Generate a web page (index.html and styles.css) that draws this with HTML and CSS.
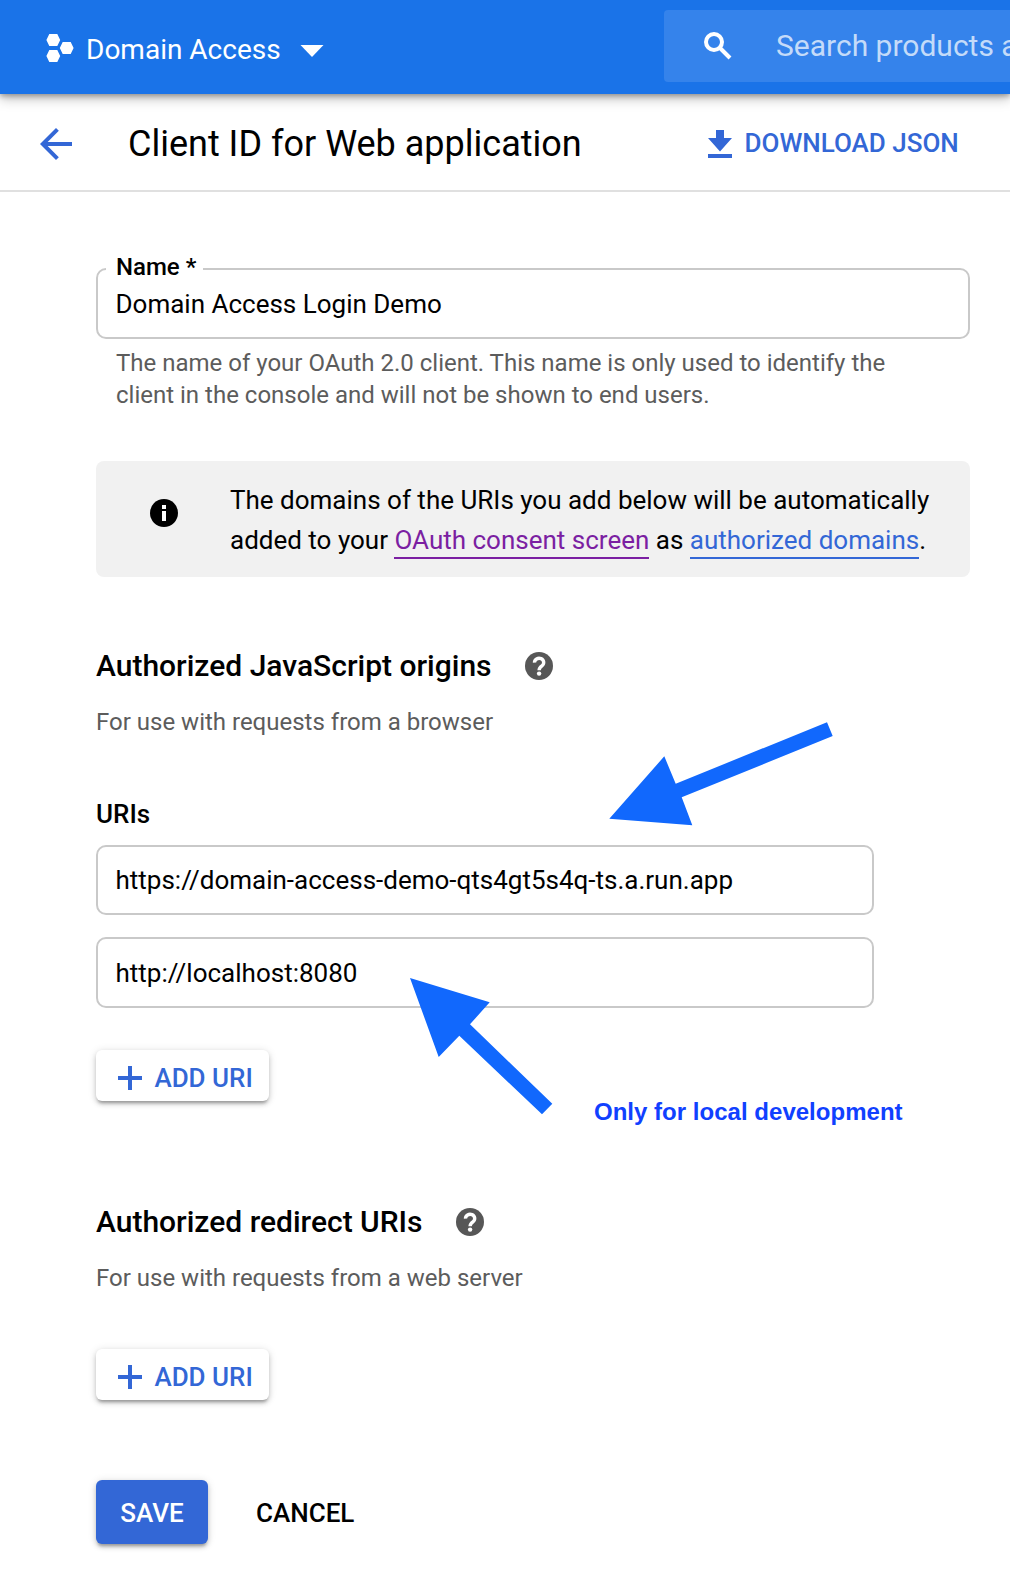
FILE: index.html
```html
<!DOCTYPE html>
<html lang="en">
<head>
<meta charset="utf-8">
<title>Client ID for Web application</title>
<link rel="stylesheet" href="styles.css">
</head>
<body>
<header class="topbar">
  <div class="project">
    <svg class="project-logo" width="28" height="28" viewBox="0 0 28 28"><path d="M.4 6 3.300 0h8l2.900 6-2.900 6h-8zM13.800 14l2.900-6h8l2.900 6-2.900 6h-8zM.4 22l2.900-6h8l2.900 6-2.900 6h-8z"/></svg>
    <span class="project-name">Domain Access</span>
    <svg class="caret" width="24" height="12" viewBox="0 0 24 12"><path d="M.5 0h23L12 12z"/></svg>
  </div>
  <div class="search">
    <svg width="28" height="28" viewBox="0 0 28 28"><circle cx="10" cy="10" r="8"/><path d="m15 15 11 11"/></svg>
    <span class="search-hint">Search products and resources</span>
  </div>
</header>

<div class="titlebar">
  <svg class="back" width="48" height="48" viewBox="0 0 24 24"><path d="M20 11H7.830l5.590-5.590L12 4l-8 8 8 8 1.410-1.410L7.830 13H20v-2z"/></svg>
  <h1>Client ID for Web application</h1>
  <a class="download">
    <svg width="24" height="28" viewBox="0 0 24 28"><path d="M8 0h8v8h8L12 21.500 0 8h8zM0 24h24v4H0z"/></svg>
    <span>DOWNLOAD JSON</span>
  </a>
</div>

<main>
  <div class="field name-field"><span class="field-label">Name *</span>Domain Access Login Demo</div>
  <p class="helper">The name of your OAuth 2.0 client. This name is only used to identify the<br>client in the console and will not be shown to end users.</p>

  <div class="notice">
    <svg width="28" height="28" viewBox="0 0 28 28"><circle cx="14" cy="14" r="14"/><path fill="#fff" d="M12 6h4v4h-4zM12 12h4v10h-4z"/></svg>
    <p>The domains of the URIs you add below will be automatically<br>added to your <a class="visited">OAuth consent screen</a> as <a class="link">authorized domains</a>.</p>
  </div>

  <section class="origins">
    <h2>Authorized JavaScript origins
      <svg class="help" width="28" height="28" viewBox="0 0 28 28"><circle cx="14" cy="14" r="14"/><path d="M9.500 10.600a4.600 4.200 0 1 1 7.400 3.200C15 15.200 14.100 15.900 14.100 18.200"/><circle class="dot" cx="14.100" cy="21.600" r="2.200"/></svg>
    </h2>
    <p class="sub">For use with requests from a browser</p>
    <h3>URIs</h3>
    <div class="field uri">https://domain-access-demo-qts4gt5s4q-ts.a.run.app</div>
    <div class="field uri second">http://localhost:8080</div>
    <button class="add"><svg width="24" height="24" viewBox="0 0 24 24"><path d="M10 0h4v10h10v4H14v10h-4V14H0v-4h10z"/></svg>ADD URI</button>
  </section>

  <section class="redirects">
    <h2>Authorized redirect URIs
      <svg class="help" width="28" height="28" viewBox="0 0 28 28"><circle cx="14" cy="14" r="14"/><path d="M9.500 10.600a4.600 4.200 0 1 1 7.400 3.200C15 15.200 14.100 15.900 14.100 18.200"/><circle class="dot" cx="14.100" cy="21.600" r="2.200"/></svg>
    </h2>
    <p class="sub">For use with requests from a web server</p>
    <button class="add"><svg width="24" height="24" viewBox="0 0 24 24"><path d="M10 0h4v10h10v4H14v10h-4V14H0v-4h10z"/></svg>ADD URI</button>
  </section>

  <div class="actions">
    <button class="save">SAVE</button>
    <button class="cancel">CANCEL</button>
  </div>
</main>

<svg class="arrows" width="1010" height="1592" viewBox="0 0 1010 1592">
  <path d="M609.300 818.700 664.300 756.300 675.700 783.700 827 722.300 832.700 736 681.700 797.300 692.300 825.300z"/>
  <path d="M410 978 489.700 1002.300 470 1024.300 552.300 1103.700 542 1114.300 459.300 1035.700 438.700 1057z"/>
</svg>
<div class="note">Only for local development</div>
</body>
</html>
```
FILE: styles.css
```css
* { box-sizing: border-box; }
body {
  position: relative;
  width: 1010px;
  height: 1592px;
  margin: 0;
  overflow: hidden;
  background: #fff;
  color: #000;
  font: 400 26px/32px Roboto, sans-serif;
}
h1, h2, h3, p { margin: 0; }
svg { display: block; flex: none; }

/* Blue product bar */
.topbar {
  position: relative;
  display: flex;
  height: 94px;
  background: #1a73e8;
  color: #fff;
  box-shadow: 0 2px 5px rgba(0, 0, 0, .28), 0 4px 12px rgba(0, 0, 0, .28);
}
.project {
  display: flex;
  flex: 0 0 664px;
  align-items: flex-start;
  padding: 30px 0 0 46px;
}
.project-logo { margin-top: 4px; fill: #fff; }
.project-name { margin: 0 19px 0 12px; font-size: 28px; line-height: 39px; }
.caret { margin-top: 15px; fill: #fff; }
.search {
  display: flex;
  flex: 1;
  height: 72px;
  margin-top: 10px;
  padding: 22px 0 0 40px;
  overflow: hidden;
  border-radius: 4px 0 0 4px;
  background: #3583eb;
}
.search svg { fill: none; stroke: #fff; stroke-width: 4; }
.search-hint {
  margin: -5px 0 0 44px;
  color: #c4dbf9;
  font-size: 30px;
  line-height: 37px;
  white-space: nowrap;
}

/* Page title row */
.titlebar {
  display: flex;
  align-items: center;
  height: 98px;
  padding-left: 32px;
  border-bottom: 2px solid #e0e0e0;
}
.back { margin-top: 4px; fill: #3367d6; }
h1 {
  flex: 0 0 580px;
  margin: 4px 0 0 48px;
  font-size: 36px;
  font-weight: 400;
  line-height: 44px;
}
.download {
  display: flex;
  gap: 12.5px;
  margin-top: 2px;
  color: #3367d6;
  font-weight: 500;
}
.download svg { margin-top: 3px; fill: currentColor; }

/* Form column */
main { padding: 76px 40px 0 96px; }
.field {
  position: relative;
  height: 71px;
  padding: 18px 17.5px 0;
  border: 2px solid #c9c9c9;
  border-radius: 10px;
}
.field-label {
  position: absolute;
  top: -17px;
  left: 8px;
  width: 97px;
  padding-left: 10px;
  background: #fff;
  font-size: 24px;
  font-weight: 500;
  line-height: 28px;
}
.helper { margin-top: 8px; padding-left: 20px; }
.helper, .sub { color: #5c5c5c; font-size: 24px; }
.notice {
  display: flex;
  gap: 52px;
  height: 116px;
  margin-top: 50px;
  padding: 19px 0 0 54px;
  border-radius: 8px;
  background: #f1f1f1;
  line-height: 40px;
  white-space: nowrap;
}
.notice svg { margin-top: 19px; }
.visited, .link { padding-bottom: 2px; border-bottom: 2px solid; }
.visited { color: #7b1fa2; }
.link { color: #3367d6; }

.origins { margin-top: 69px; }
h2 {
  display: flex;
  gap: 33.5px;
  align-items: center;
  font-size: 30px;
  font-weight: 500;
  line-height: 39px;
}
.help { margin-top: 1px; fill: #575757; }
.help path { fill: none; stroke: #fff; stroke-width: 3.4; }
.help .dot { fill: #fff; }
.sub { margin-top: 21px; }
h3 { margin: 60px 0 15px; font-size: 26px; font-weight: 500; }
.uri { width: 778px; height: 70px; padding-top: 17px; }
.uri.second { height: 71px; margin-top: 22px; padding-top: 18px; }

button {
  padding: 0;
  border: 0;
  background: none;
  color: inherit;
  font: 500 26px/32px Roboto, sans-serif;
}
.add, .save {
  border-radius: 6px;
  box-shadow: 0 4px 3px -2px rgba(0, 0, 0, .24), 0 3px 5px rgba(0, 0, 0, .16), 0 1px 9px rgba(0, 0, 0, .13);
}
.add {
  display: flex;
  gap: 12.4px;
  width: 173px;
  height: 51px;
  margin-top: 42px;
  padding: 12px 0 0 22px;
  background: #fff;
  color: #3367d6;
}
.add svg { margin-top: 4px; fill: currentColor; }
.redirects { margin-top: 101px; }
.redirects .add { margin-top: 55px; }
.actions { display: flex; gap: 48px; margin-top: 80px; }
.actions button { height: 64px; padding-top: 2px; }
.save { width: 112px; background: #3367d6; color: #fff; }

/* Callouts drawn over the form */
.arrows { position: absolute; top: 0; left: 0; fill: #1168fd; }
.note {
  position: absolute;
  top: 1098px;
  left: 594px;
  color: #1040ff;
  font: bold 24px/27px "Liberation Sans", Arial, sans-serif;
  letter-spacing: .02px;
  white-space: nowrap;
}
```
